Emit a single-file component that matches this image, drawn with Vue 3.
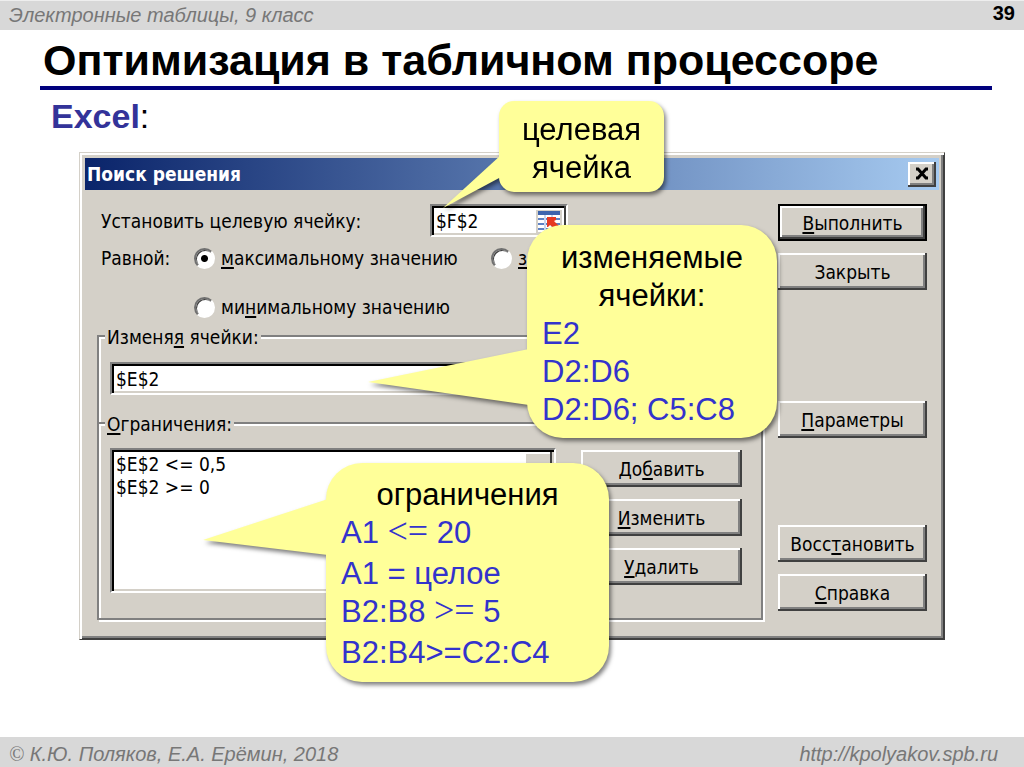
<script setup>
import { ref } from 'vue'

const goal = ref('max')
const target = ref('$F$2')
const cells = ref('$E$2')
const limits = ['$E$2 <= 0,5', '$E$2 >= 0']
</script>

<template>
  <div class="slide">
    <header class="bar top">
      <span>Электронные таблицы, 9 класс</span>
      <b>39</b>
    </header>

    <main>
      <h1>Оптимизация в табличном процессоре</h1>
      <h2><b>Excel</b>:</h2>

      <div class="stage">
        <section class="dialog" aria-label="Поиск решения">
          <div class="caption">
            <span>Поиск решения</span>
            <button class="btn close" aria-label="Закрыть окно">
              <svg viewBox="0 0 16 14" width="16" height="14">
                <path d="M2 2h2l8 9h2M14 2h-2L4 11H2" fill="none" stroke="#000" stroke-width="3" />
              </svg>
            </button>
          </div>

          <div class="body">
            <form class="left" @submit.prevent>
              <div class="target">
                <label for="target">Установить целевую ячейку:</label>
                <div class="field ref">
                  <input id="target" v-model="target" type="text" />
                  <button class="picker" aria-label="Выбрать ячейку">
                    <svg viewBox="0 0 26 24" width="26" height="24">
                      <path fill="#d4d0c8" d="M0 0h26v24H0z" />
                      <path fill="#fff" d="M2 2h22v20H2z" />
                      <path fill="#3d64ad" d="M2 1h22v4H2z" />
                      <path stroke="#5f82c4" stroke-width="2" d="M2 9h22M2 14h22M2 19h22" />
                      <path stroke="#c9d6ee" stroke-width="2" d="M9 5v17M16 5v17" />
                      <path fill="#e63a22" d="M11 7h9v3l-2 1 5 5-3 4-6-5-2 2h-1z" />
                    </svg>
                  </button>
                </div>
              </div>

              <div class="goals" role="radiogroup" aria-labelledby="goal">
                <span id="goal">Равной:</span>
                <label><input v-model="goal" type="radio" name="goal" value="max" /><span><u>м</u>аксимальному значению</span></label>
                <label><input v-model="goal" type="radio" name="goal" value="val" /><span><u>з</u></span></label>
                <label class="second"><input v-model="goal" type="radio" name="goal" value="min" /><span>ми<u>н</u>имальному значению</span></label>
              </div>

              <fieldset class="cells">
                <legend>Изменя<u>я</u> ячейки:</legend>
                <div class="field">
                  <input v-model="cells" type="text" aria-label="Изменяя ячейки" />
                </div>
              </fieldset>

              <fieldset class="limits">
                <legend><u>О</u>граничения:</legend>
                <div class="split">
                  <div class="field list">
                    <ul>
                      <li v-for="l in limits" :key="l">{{ l }}</li>
                    </ul>
                    <span class="scroll"></span>
                  </div>
                  <div class="edit">
                    <button class="btn">До<u>б</u>авить</button>
                    <button class="btn"><u>И</u>зменить</button>
                    <button class="btn"><u>У</u>далить</button>
                  </div>
                </div>
              </fieldset>
            </form>

            <div class="actions">
              <button class="btn default"><u>В</u>ыполнить</button>
              <button class="btn">Закрыть</button>
              <button class="btn options"><u>П</u>араметры</button>
              <button class="btn restore">Восс<u>т</u>ановить</button>
              <button class="btn"><u>С</u>правка</button>
            </div>
          </div>
        </section>

        <aside class="note one">
          <svg class="tail" width="58" height="54" viewBox="0 0 58 54"><path d="M58 0 0 53 58 22z" /></svg>
          <p>целевая</p>
          <p>ячейка</p>
        </aside>

        <aside class="note two">
          <svg class="tail" width="161" height="56" viewBox="0 0 161 56"><path d="M161 0 0 33 161 56z" /></svg>
          <p>изменяемые</p>
          <p>ячейки:</p>
          <p class="ex">E2</p>
          <p class="ex">D2:D6</p>
          <p class="ex">D2:D6; C5:C8</p>
        </aside>

        <aside class="note three">
          <svg class="tail" width="125" height="56" viewBox="0 0 125 56"><path d="M125 0 0 41 125 56z" /></svg>
          <p>ограничения</p>
          <p class="ex">A1 <i>&lt;=</i> 20</p>
          <p class="ex spaced">A1 = целое</p>
          <p class="ex">B2:B8 <i>&gt;=</i> 5</p>
          <p class="ex spaced">B2:B4&gt;=C2:C4</p>
        </aside>
      </div>
    </main>

    <footer class="bar bottom">
      <span><span class="copy">©</span> К.Ю. Поляков, Е.А. Ерёмин, 2018</span>
      <a href="http://kpolyakov.spb.ru">http://kpolyakov.spb.ru</a>
    </footer>
  </div>
</template>

<style>
body {
  margin: 0;
  background: #fff;
}
</style>

<style scoped>
* {
  box-sizing: border-box;
}
.slide {
  min-height: 100vh;
  display: flex;
  flex-direction: column;
  font-family: "Liberation Sans", Arial, sans-serif;
  color: #000;
}
main {
  flex: 1;
}
.bar {
  display: flex;
  justify-content: space-between;
  align-items: center;
  height: 30px;
  background: #d8d8d8;
  color: #777;
  font-size: 20px;
  font-style: italic;
}
.top {
  padding: 0 9px;
  border-top: 1px solid #eee;
}
.top b {
  color: #000;
  font-style: normal;
  line-height: 24px;
  align-self: flex-start;
}
.bottom {
  padding: 4px 26px 0 9px;
}
.bottom a {
  color: inherit;
  text-decoration: none;
}
.copy {
  font-family: "Liberation Serif", serif;
}
h1 {
  margin: 0 32px 0 40px;
  padding: 8px 0 0 3px;
  height: 60px;
  border-bottom: 4px solid #00007d;
  font-size: 43px;
  line-height: 44px;
  white-space: nowrap;
}
h2 {
  margin: 0 0 0 51px;
  height: 62px;
  padding-top: 6px;
  font-size: 34px;
  line-height: 40px;
  font-weight: normal;
}
h2 b {
  color: #333399;
}
.stage {
  position: relative;
  margin: 0 79px;
}
.dialog {
  padding: 5px;
  background: #d4d0c8;
  border: 1px solid;
  border-color: #d4d0c8 #404040 #404040 #d4d0c8;
  box-shadow: inset 2px 2px #fff, inset -1px -1px #404040, inset -3px -3px #808080;
  font-family: "DejaVu Sans Condensed", Tahoma, "DejaVu Sans", sans-serif;
  font-size: 19px;
}
.caption {
  display: flex;
  align-items: center;
  justify-content: space-between;
  height: 32px;
  padding: 0 3px 0 2px;
  background: linear-gradient(90deg, #0a246a, #a6caf0);
  color: #fff;
  font-weight: bold;
}
.body {
  display: flex;
  gap: 15px;
  padding: 14px 12px 14px;
}
.left {
  flex: 1;
  min-width: 0;
}
.btn {
  display: block;
  width: 100%;
  height: 37px;
  padding: 0;
  border: 0;
  background: #d4d0c8;
  box-shadow: inset -2px -2px #404040, inset 2px 2px #fff, inset -4px -4px #808080;
  font: inherit;
  color: #000;
}
.btn.close {
  display: flex;
  align-items: center;
  justify-content: center;
  width: 28px;
  height: 25px;
}
.btn.default {
  border: 2px solid #000;
}
u {
  text-decoration-thickness: 2px;
  text-underline-offset: 2px;
  text-decoration-skip-ink: none;
}
.target {
  display: flex;
  align-items: center;
  padding-left: 4px;
}
.target label {
  width: 329px;
}
.field {
  display: flex;
  height: 33px;
  background: #fff;
  border: 2px solid;
  border-color: #808080 #fff #fff #808080;
  box-shadow: inset 2px 2px #000, inset -2px -2px #d4d0c8;
}
.field input {
  flex: 1;
  min-width: 0;
  border: 0;
  padding: 0 0 0 4px;
  background: none;
  font: inherit;
  outline: none;
}
.ref {
  width: 138px;
}
.picker {
  width: 30px;
  padding: 3px 2px 0 0;
  border: 0;
  border-right: 2px solid #404040;
  background: none;
  line-height: 0;
}
.goals {
  display: grid;
  grid-template-columns: 93px 297px 1fr;
  row-gap: 25px;
  padding: 9px 0 0 4px;
  line-height: 24px;
}
.goals label {
  display: flex;
  align-items: center;
  gap: 6px;
}
.goals .second {
  grid-column: 2;
}
.goals input {
  appearance: none;
  width: 21px;
  height: 21px;
  margin: 0;
  border: 2px solid;
  border-color: #707070 #fff #fff #707070;
  border-radius: 50%;
  background: #fff;
  box-shadow: inset 1px 1px #404040;
}
.goals input:checked {
  background: radial-gradient(circle, #000 3px, #fff 4px);
}
fieldset {
  display: flex;
  flex-direction: column;
  min-width: 0;
  margin: 0;
  padding: 0 19px 0 11px;
  border: 2px solid #808080;
}
legend {
  float: left;
  align-self: flex-start;
  margin: -12px 0 0 -5px;
  padding: 0 2px;
  background: #d4d0c8;
  line-height: 24px;
}
.cells {
  height: 87px;
  margin-top: 16px;
  border-bottom: 0;
  box-shadow: inset 2px 2px #fff, 2px 0 #fff;
}
.cells .field {
  width: 446px;
  margin-top: 13px;
}
.limits {
  padding-bottom: 25px;
  box-shadow: inset 2px 2px #fff, 2px 2px #fff;
}
.split {
  display: flex;
  justify-content: space-between;
  margin-top: 12px;
}
.list {
  width: 446px;
  height: 145px;
}
ul {
  flex: 1;
  margin: 0;
  padding: 3px 0 0 4px;
  list-style: none;
  line-height: 23px;
}
.scroll {
  width: 28px;
  margin: 2px 2px 0 0;
  background: #d4d0c8;
  border-right: 2px solid #404040;
  box-shadow: inset 2px 2px #fff;
}
.edit {
  width: 161px;
  display: flex;
  flex-direction: column;
  gap: 12px;
  padding-top: 2px;
}
.actions {
  width: 149px;
  display: flex;
  flex-direction: column;
  gap: 12px;
}
.actions .options {
  margin-top: 99px;
}
.actions .restore {
  margin-top: 75px;
}
.note {
  position: absolute;
  background: #ffff99;
  font-size: 31px;
  line-height: 38px;
  text-align: center;
  filter: drop-shadow(2px 3px 2px rgba(0, 0, 0, 0.5));
}
.note p {
  margin: 0;
  white-space: nowrap;
}
.note .ex {
  text-align: left;
  color: #3333cc;
}
.note .spaced {
  padding-top: 3px;
}
.note i {
  font-family: "Liberation Serif", serif;
  font-size: 36px;
  font-style: normal;
  line-height: 1px;
}
.tail {
  position: absolute;
  right: calc(100% - 2px);
  fill: #ffff99;
}
.one {
  left: 420px;
  top: -51px;
  width: 165px;
  padding: 10px 0 5px;
  border-radius: 15px;
}
.one .tail {
  top: 54px;
}
.two {
  left: 448px;
  top: 73px;
  width: 250px;
  padding: 14px 15px 9px;
  border-radius: 36px;
}
.two .tail {
  top: 124px;
}
.three {
  left: 247px;
  top: 311px;
  width: 283px;
  padding: 13px 15px 10px;
  border-radius: 36px;
}
.three .tail {
  top: 36px;
}
</style>
